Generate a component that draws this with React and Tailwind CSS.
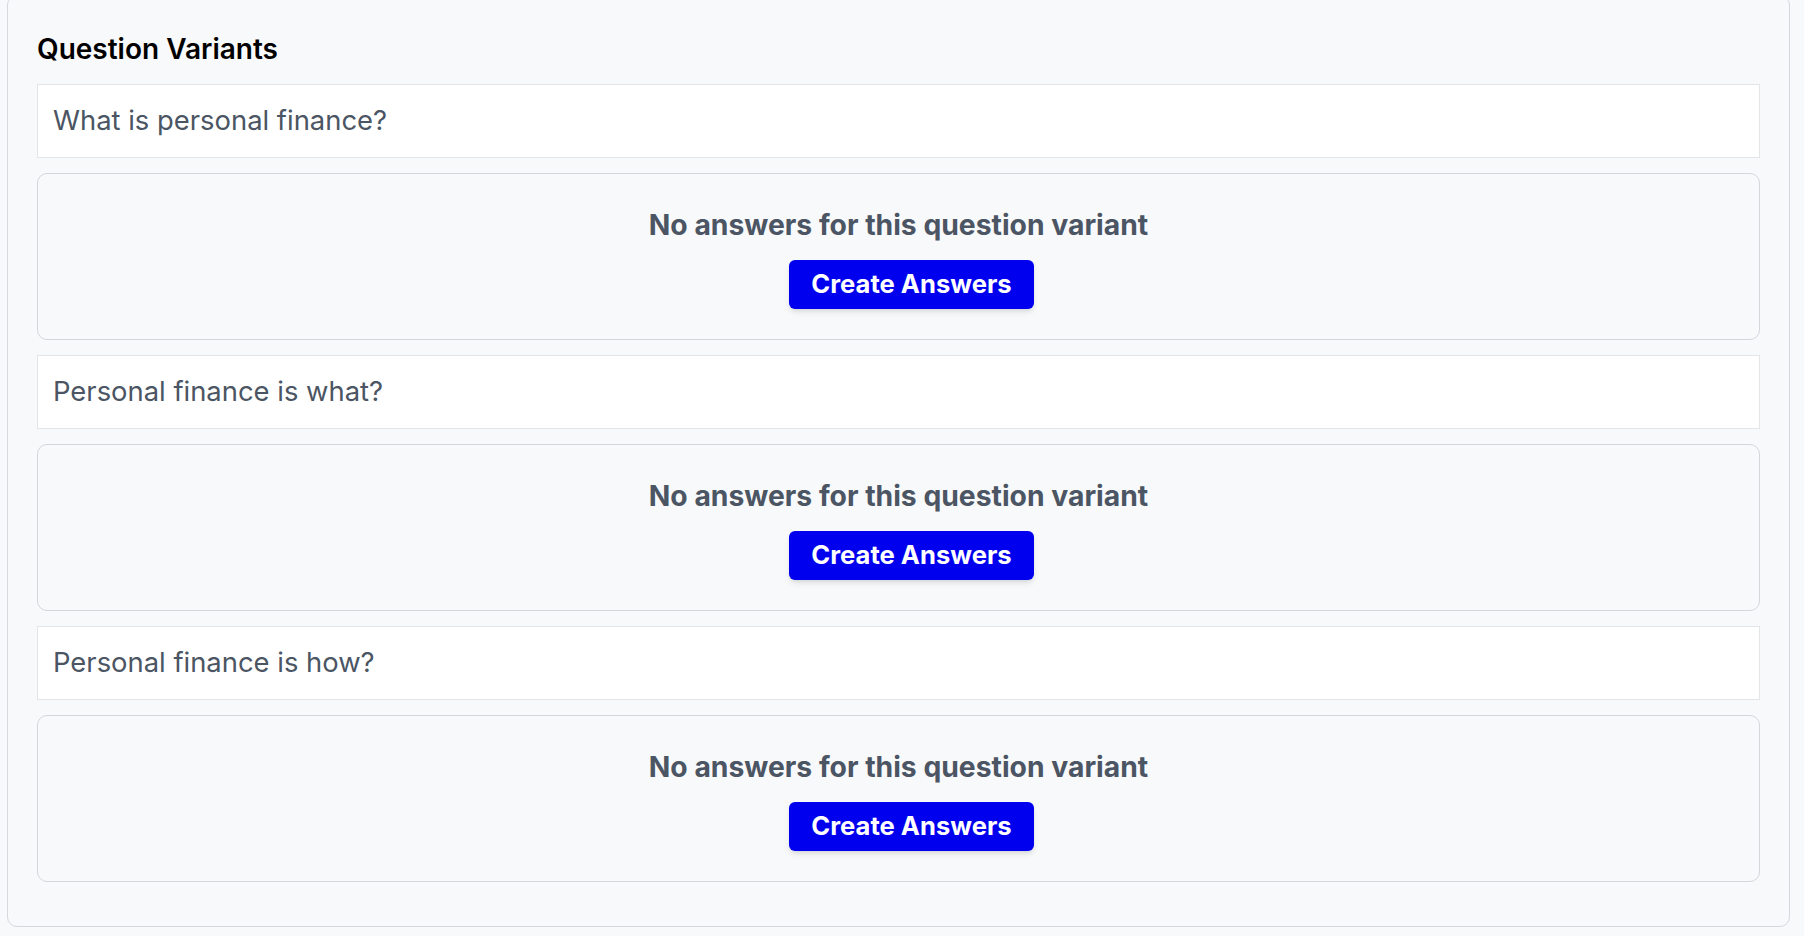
export default function App() {
  const variants = [
    "What is personal finance?",
    "Personal finance is what?",
    "Personal finance is how?",
  ];

  return (
    <div
      className="min-h-screen bg-[#f8f9fb] pl-[7px] pr-[14px] pb-[12px]"
      style={{ fontFamily: "Inter, 'Noto Sans', sans-serif" }}
    >
      {/* Card */}
      <div className="-mt-[5px] rounded-[10px] border border-[#d5d8dd] bg-[#f8f9fb] px-[29px] pt-[34px] pb-[29px]">
        <h2 className="mb-[16px] text-[28px] leading-[38px] font-semibold text-black">
          Question Variants
        </h2>

        <div className="flex flex-col">
          {variants.map((question, idx) => (
            <div key={idx}>
              <div className="flex h-[74px] items-center border border-[#e3e5e9] bg-white px-[15px] text-[27.4px] text-[#4b5563]">
                {question}
              </div>

              <div className="my-[15px] flex flex-col items-center rounded-[10px] border border-[#d3d6db] bg-[#f8f9fb] pt-[32px] pb-[30px]">
                <p className="mb-[16px] text-[28.3px] leading-[38px] font-bold text-[#4b5563]">
                  No answers for this question variant
                </p>
                <button className="ml-[26px] flex h-[49px] items-center rounded-[6px] bg-[#0000ee] px-[22px] text-[25.6px] font-bold text-white shadow-md">
                  Create Answers
                </button>
              </div>
            </div>
          ))}
        </div>
      </div>
    </div>
  );
}
